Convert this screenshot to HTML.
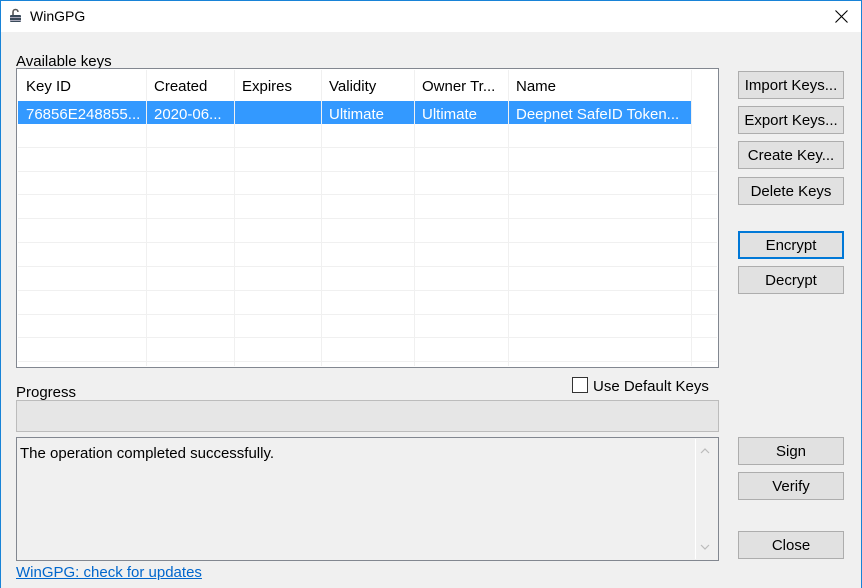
<!DOCTYPE html>
<html><head><style>
*{box-sizing:border-box;margin:0;padding:0}
body{width:862px;height:588px;background:#f0f0f0;font-family:"Liberation Sans",sans-serif;font-size:15px;color:#000;position:relative;overflow:hidden}
.a{position:absolute;white-space:nowrap}
.frame{position:absolute;left:0;top:0;width:862px;height:588px;border:1px solid #1883d7;border-bottom:none;pointer-events:none}
.title{position:absolute;left:0;top:0;width:862px;height:32px;background:#fff}
.btn{position:absolute;left:738px;width:106px;height:28px;background:#e1e1e1;border:1px solid #adadad;text-align:center;line-height:28px;color:#000}
.hl{position:absolute;left:18px;width:699px;height:1px;background:#f0f0f0}
.vl{position:absolute;top:70px;width:1px;height:296px;background:#f0f0f0}
.hd{position:absolute;top:78px}
.rw{position:absolute;top:106px;color:#fff}
</style></head><body>
<div class="title"></div>
<svg class="a" style="left:8px;top:8px" width="16" height="16" viewBox="0 0 16 16"><path d="M5 7V4a2.5 2.5 0 0 1 5 0" fill="none" stroke="#555" stroke-width="1.6"/><rect x="2" y="7" width="11" height="7" rx="1" fill="#3a4a5a"/><rect x="2" y="9" width="11" height="1" fill="#aab"/><rect x="2" y="12" width="11" height="1" fill="#aab"/></svg>
<div class="a" style="left:30px;top:8px;font-size:14px">WinGPG</div>
<svg class="a" style="left:835px;top:10px" width="13" height="13" viewBox="0 0 13 13"><path d="M0.5 0.5L12.5 12.5M12.5 0.5L0.5 12.5" stroke="#000" stroke-width="1.1"/></svg>

<div class="a" style="left:16px;top:53px">Available keys</div>
<div class="a" style="left:16px;top:68px;width:703px;height:300px;background:#fff;border:1px solid #828790"></div>
<div class="a" style="left:18px;top:101px;width:673px;height:23px;background:#3399ff"></div>
<div class="hl" style="top:147px"></div><div class="hl" style="top:171px"></div><div class="hl" style="top:194px"></div><div class="hl" style="top:218px"></div><div class="hl" style="top:242px"></div><div class="hl" style="top:266px"></div><div class="hl" style="top:290px"></div><div class="hl" style="top:314px"></div><div class="hl" style="top:337px"></div><div class="hl" style="top:361px"></div>
<div class="vl" style="left:146px"></div><div class="vl" style="left:234px"></div><div class="vl" style="left:321px"></div><div class="vl" style="left:414px"></div><div class="vl" style="left:508px"></div><div class="vl" style="left:691px"></div>
<div class="a hd" style="left:26px">Key ID</div><div class="a hd" style="left:154px">Created</div><div class="a hd" style="left:242px">Expires</div><div class="a hd" style="left:329px">Validity</div><div class="a hd" style="left:422px">Owner Tr...</div><div class="a hd" style="left:516px">Name</div>
<div class="a rw" style="left:26px">76856E248855...</div><div class="a rw" style="left:154px">2020-06...</div><div class="a rw" style="left:329px">Ultimate</div><div class="a rw" style="left:422px">Ultimate</div><div class="a rw" style="left:516px">Deepnet SafeID Token...</div>

<div class="btn" style="top:71px">Import Keys...</div>
<div class="btn" style="top:106px">Export Keys...</div>
<div class="btn" style="top:141px">Create Key...</div>
<div class="btn" style="top:177px">Delete Keys</div>
<div class="btn" style="top:231px;border:2px solid #0078d7;line-height:26px">Encrypt</div>
<div class="btn" style="top:266px">Decrypt</div>

<div class="a" style="left:16px;top:384px">Progress</div>
<div class="a" style="left:572px;top:377px;width:16px;height:16px;background:#fff;border:1px solid #333"></div>
<div class="a" style="left:593px;top:378px">Use Default Keys</div>
<div class="a" style="left:16px;top:400px;width:703px;height:32px;background:#e6e6e6;border:1px solid #bcbcbc"></div>
<div class="a" style="left:16px;top:437px;width:703px;height:124px;background:#f0f0f0;border:1px solid #828790"></div>
<div class="a" style="left:695px;top:439px;width:22px;height:120px;border-left:1px solid #fff"></div>
<svg class="a" style="left:700px;top:448px" width="10" height="6" viewBox="0 0 10 6"><path d="M1 5L5 1L9 5" fill="none" stroke="#bbb" stroke-width="1.2"/></svg>
<svg class="a" style="left:700px;top:544px" width="10" height="6" viewBox="0 0 10 6"><path d="M1 1L5 5L9 1" fill="none" stroke="#bbb" stroke-width="1.2"/></svg>
<div class="a" style="left:20px;top:445px">The operation completed successfully.</div>
<div class="btn" style="top:437px">Sign</div>
<div class="btn" style="top:472px">Verify</div>
<div class="btn" style="top:531px">Close</div>
<div class="a" style="left:16px;top:564px;color:#0066cc;text-decoration:underline">WinGPG: check for updates</div>
<div class="frame"></div>
</body></html>
